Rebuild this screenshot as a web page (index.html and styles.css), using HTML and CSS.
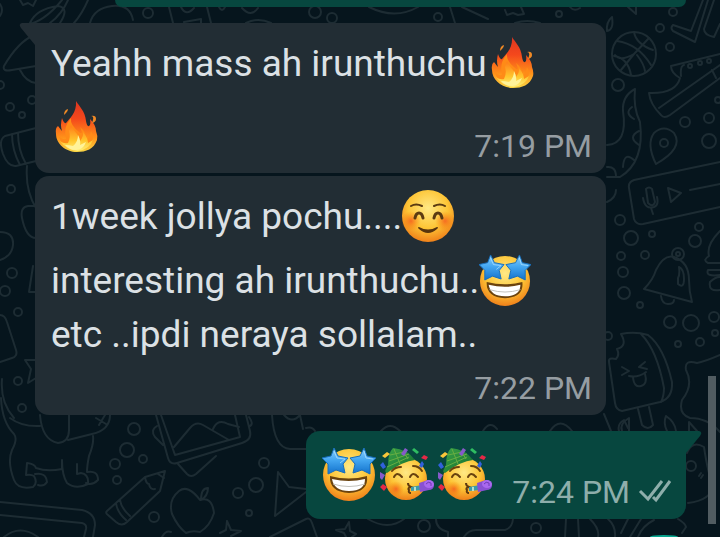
FILE: index.html
```html
<!DOCTYPE html>
<html lang="en">
<head>
<meta charset="utf-8">
<meta name="viewport" content="width=device-width, initial-scale=1">
<title>Chat</title>
<link rel="stylesheet" href="styles.css">
</head>
<body>
<svg class="wallpaper" viewBox="0 0 720 537" preserveAspectRatio="xMinYMin slice" aria-hidden="true">
  <!-- left edge -->
  <path d="M0 16Q4 10 0 4M20 0l3 5 5-2 5 3 3-6M68 0Q62 14 50 23M88 0Q82 14 74 23M62 0Q44 22 26 25M30 23Q36 9 58 6Q70 8 60 23M34 35Q18 42 4 66Q2 72 12 70L36 66M20 70Q26 82 36 83M90 23Q94 8 112 6Q130 4 133 20"/>
  <circle cx="148" cy="13" r="5"/><circle cx="10" cy="107" r="4"/><circle cx="22" cy="115" r="3"/><circle cx="32" cy="100" r="4"/><circle cx="0" cy="85" r="4"/>
  <path d="M36 128L5 136Q-2 140 3 154Q8 167 16 166L36 161M12 134Q12 150 20 165M18 133Q18 150 26 164M27 166Q25 190 36 208M36 206H28Q20 207 22 218Q26 238 36 238M0 232Q14 232 13 245Q12 256 0 260M33 266l-4 26h7M0 315Q5 315 7 322L16 350Q18 356 12 358L0 362M36 360H25l6 9-3 14 8-5M2 379Q0 402 14 418"/>
  <circle cx="11" cy="189" r="4"/><circle cx="12" cy="273" r="5"/><circle cx="5" cy="291" r="5"/><circle cx="18" cy="312" r="4"/><circle cx="18" cy="381" r="4"/><circle cx="22" cy="408" r="4"/>
  <!-- dog -->
  <path d="M1 398Q2 422 14 434Q18 439 12 450Q7 462 14 480Q18 490 33 487Q38 483 34 476Q31 474 26 475L27 463Q35 464 36 468Q47 472 62 469L62 460Q62 475 67 483Q76 490 88 484Q89 474 81 473L77 474L77 464M10 418Q22 427 40 426M40 415Q42 440 58 443Q69 442 69 430V415M68 440L92 434Q110 430 110 415M93 436Q94 444 89 456Q87 466 87 472Q98 470 98 480Q92 486 86 483M35 474Q46 472 47 482Q44 487 38 485M96 418l10 6M105 415l-6 10"/>
  <path d="M0 502L82 510Q95 513 95 525L93 537M0 515L82 523Q87 524 86 529L84 537M4 537Q20 524 38 537"/>
  <!-- pencil, photographs and fruit -->
  <path d="M107 511L145 477L165 471L160 491L127 522Q122 527 116 522L108 515Q105 513 107 511M145 477Q146 484 149 484Q150 490 155 489M158 474l6 4M116 503Q117 512 126 520M120 500Q121 508 130 516"/>
  <path d="M156 415L168 458Q170 465 177 463L242 443Q252 440 250 431L246 415M161 415L175 455L240 437L235 415M174 447L190 428Q196 421 203 425L229 440M213 429Q218 418 228 424L239 427M157 426Q150 430 155 437L163 445M178 464L187 474Q191 478 196 474L216 456M250 426Q254 424 249 417"/>
  <path d="M200 500Q188 484 179 491Q168 500 172 514Q178 527 186 533Q192 530 200 532Q210 526 214 513Q212 496 200 500M201 500Q201 488 208 488Q208 496 201 500"/>
  <circle cx="134" cy="429" r="6"/><circle cx="127" cy="450" r="7"/><circle cx="143" cy="459" r="4"/><circle cx="115" cy="464" r="5"/><circle cx="117" cy="480" r="4"/><circle cx="154" cy="517" r="5"/><circle cx="264" cy="463" r="5"/><circle cx="256" cy="485" r="7"/><circle cx="238" cy="493" r="5"/><circle cx="249" cy="513" r="3"/>
  <path d="M272 415Q274 448 290 449H306M284 415Q292 424 300 415l3 14M278 472L275 516L306 492M278 472L289 487L306 489M227 521l4 9 10 1-10 5M227 521l-1 9-6 3M270 537L306 519Q310 517 312 523L317 537M162 537Q166 530 171 532"/>
  <!-- upper strip -->
  <path d="M169 7l4 16M181 7Q186 17 194 8M207 7l4 16M184 22l17-3v4M219 7q3 6 6 0M242 8Q251 18 258 8M246 23Q258 17 271 23M369 7Q395 20 418 7M450 7l5 16M462 7l26 12M505 10l2 5 6-2 5 2 6-1-3-7M515 23Q527 19 540 23M570 7Q574 12 580 8M628 7l8 7V7"/>
  <circle cx="315" cy="12" r="6"/><circle cx="332" cy="18" r="5"/><circle cx="438" cy="17" r="4"/><circle cx="559" cy="14" r="3"/>
  <!-- ball, shoe, banana -->
  <circle cx="634" cy="54" r="22"/>
  <path d="M617 41Q638 44 651 65M634 32Q636 44 653 50M634 54Q620 62 615 55M634 54L649 38M634 54L621 70M614 56Q628 58 631 75M637 55Q644 64 645 71M607 31Q606 22 612 17Q614 30 607 31"/>
  <path d="M708 0L695 42L673 31Q670 28 673 25L691 31L703 0M714 0L704 29Q704 35 714 37L720 24M720 54L671 66Q671 73 680 78Q676 94 649 93Q650 104 661 115Q664 119 670 115L720 78M720 65L659 108M684 65Q680 66 681 76M712 70l4 8"/>
  <circle cx="690" cy="66" r="2"/><circle cx="700" cy="63" r="2"/><circle cx="709" cy="61" r="2"/>
  <path d="M635 89Q622 96 623 111Q628 144 607 145M635 89Q633 108 640 122Q645 162 620 177H607M632 107q-8 6 2 12M639 131q-12 6 0 14M634 160q-10-9-11 7M607 167Q616 166 616 177"/>
  <path d="M656 164Q646 144 654 133Q664 124 674 133Q684 148 656 164"/><circle cx="664" cy="143" r="4"/>
  <circle cx="673" cy="12" r="4"/><circle cx="660" cy="28" r="4"/><circle cx="670" cy="47" r="4"/><circle cx="618" cy="85" r="6"/><circle cx="685" cy="122" r="5"/><circle cx="709" cy="118" r="5"/><circle cx="709" cy="141" r="7"/><circle cx="718" cy="100" r="3"/>
  <!-- voice note and bell -->
  <path d="M720 162L634 180Q628 182 629 188L634 219Q636 225 643 224L720 207M646 189q3-3 6 0l3 13q-2 6-7 1zM643 198q2 12 11 9q5-2 3-10M651 208l2 6M668 188l13 5-10 9zM690 190L720 184M607 202q9-4 9-12"/>
  <path d="M644 289Q653 280 656 270Q664 254 674 257Q689 262 689 280Q689 291 692 302L644 289M661 296Q662 304 668 304T674 300M679 267q5 2 5 12t-6 5v-6q2-3 1-11"/><circle cx="678" cy="254" r="6"/><circle cx="678" cy="254" r="2"/>
  <circle cx="620" cy="220" r="5"/><circle cx="631" cy="238" r="7"/><circle cx="652" cy="234" r="3"/><circle cx="621" cy="256" r="4"/><circle cx="645" cy="255" r="4"/><circle cx="623" cy="272" r="5"/><circle cx="624" cy="293" r="6"/><circle cx="640" cy="305" r="3"/><circle cx="699" cy="227" r="4"/><circle cx="695" cy="241" r="6"/><circle cx="670" cy="322" r="6"/><circle cx="691" cy="323" r="8"/><circle cx="714" cy="317" r="5"/><circle cx="678" cy="344" r="3"/><circle cx="700" cy="342" r="4"/><circle cx="715" cy="333" r="3"/><circle cx="608" cy="336" r="4"/>
  <path d="M720 231Q706 245 709 256Q702 260 708 263H720M708 270h12M708 270q-3 7 12 5M710 282q5-5 10-5M710 282q-2 10 10 8M720 355Q704 362 697 363Q684 359 686 370Q694 385 682 400Q678 414 690 418Q708 418 720 432"/>
  <!-- ice lolly -->
  <path d="M621 334Q635 331 648 335Q664 347 672 382Q673 398 660 402L622 411Q616 410 615 403L609 362Q608 357 616 359Q620 355 617 349Q628 346 621 334M641 334Q657 350 664 388Q664 396 661 402M638 409l4 16q6 6 11 0l-4-18M622 367l7 4-7 4M645 362l-6 5 8 2M629 376q9 2 17-4M633 377q1 11 8 9t4-12"/>
  <path d="M604 414l7 17M622 431Q619 424 629 418L629 431M667 431Q663 423 666 416Q675 422 676 431M689 431v-9l8 9M687 453Q692 440 704 447Q708 474 713 485Q712 500 688 503"/><circle cx="691" cy="466" r="5"/><path d="M699 476l2-3m0 5l2-3"/>
  <!-- lower strip -->
  <path d="M315 431Q312 426 306 428M381 431Q390 421 400 431M483 431Q490 420 497 429M550 431Q560 416 572 431M619 431Q617 424 624 420L628 428M349 522l-4 7-9 1 8 3 2 4M349 522l1 9 6 3-4 3M368 519Q388 531 404 519M436 519Q436 529 448 532V537M464 537Q468 530 476 530H505Q512 528 513 519M566 519L565 537M578 519L579 537M590 519Q600 529 598 537M608 519Q616 526 615 537M628 519L621 533M641 519L630 537M654 520Q642 526 638 537M678 519Q685 523 686 527L682 533"/><circle cx="424" cy="526" r="6"/><circle cx="536" cy="528" r="5"/>
</svg>

<svg class="defs" aria-hidden="true">
  <defs>
    <radialGradient id="face" cx="50%" cy="35%" r="64%"><stop offset="0" stop-color="#ffe985"/><stop offset=".6" stop-color="#fdc536"/><stop offset="1" stop-color="#f0831b"/></radialGradient>
    <radialGradient id="blush"><stop stop-color="#f4511e" stop-opacity=".75"/><stop offset="1" stop-color="#f57c00" stop-opacity="0"/></radialGradient>
    <linearGradient id="flame" x1="0" y1="0" x2="0" y2="1"><stop stop-color="#dc3620"/><stop offset=".35" stop-color="#f4481c"/><stop offset=".72" stop-color="#ff9219"/><stop offset="1" stop-color="#fbd744"/></linearGradient>
    <linearGradient id="ember" x1="0" y1="0" x2="0" y2="1"><stop stop-color="#ff7a19"/><stop offset=".6" stop-color="#ffc62c"/><stop offset="1" stop-color="#fff17a"/></linearGradient>
    <linearGradient id="star" x1="0" y1="0" x2="0" y2="1"><stop stop-color="#8ccffb"/><stop offset=".45" stop-color="#45a8f2"/><stop offset="1" stop-color="#1271cb"/></linearGradient>
    <linearGradient id="hat" x1="0" y1="0" x2="1" y2="1"><stop stop-color="#3da548"/><stop offset="1" stop-color="#106b2d"/></linearGradient>
    <symbol id="fire" viewBox="0 0 52 52">
      <path fill="url(#flame)" d="M25 0C28 5 34 10 35 20Q36 26 38 25Q40 24 39 18Q45 24 45 30Q47 35 46 39C43 48 35 51 26 51C15 51 5 43 5 33Q4 27 7 25Q10 29 11 30Q9 24 11 17Q13 23 15 22C18 18 26 12 25 0"/>
      <path fill="#ff8b17" d="M20 17Q19 24 28 31Q33 35 29 26Q36 32 36 38Q39 36 40 30Q44 36 40 42Q34 49 24 49Q11 47 8 36Q15 40 15 37Q12 26 20 17"/>
      <path fill="url(#ember)" d="M20 24Q22 29 26 33Q29 37 29 40Q33 35 32 31Q37 37 37 42L42 39Q39 48 27 50Q15 49 9 40Q13 43 17 42Q20 36 18 30Z"/>
      <path fill="#fff39a" d="M27 34Q30 40 29 44L35 41Q32 49 25 49T14 44Q18 44 22 45Q27 41 27 34"/>
      <path fill="#f18a25" d="M17 8q-4 1-4 6l2-2q2-2 2-4M40 15q3 0 2 4l-1 3q4-1 4-4q0-4-5-3"/>
    </symbol>
    <symbol id="smile" viewBox="0 0 52 52">
      <circle cx="26" cy="26" r="26" fill="url(#face)"/><circle cx="9" cy="31" r="10" fill="url(#blush)"/><circle cx="43" cy="31" r="10" fill="url(#blush)"/>
      <g fill="none" stroke="#5b3b12" stroke-linecap="round"><path stroke-width="2" d="M9 16Q14 13 20 16M32 16Q38 13 43 16"/><path stroke-width="3" d="M13 28Q14 23 17 23T21 28M32 28Q33 23 36 23T40 28"/></g>
      <path fill="#57340d" d="M17 37Q26 42 35 37Q37 37 35 39Q26 47 17 39Q15 37 17 37"/>
    </symbol>
    <symbol id="starstruck" viewBox="0 0 54 54">
      <circle cx="27" cy="28" r="26" fill="url(#face)"/>
      <path fill="#6b430e" d="M8 29Q27 34 45 29Q47 45 27 46Q7 45 8 29"/><path fill="#fff" d="M10 32Q27 36 43 32Q43 44 27 44Q12 44 10 32"/><path d="M11 37Q27 42 43 37" fill="none" stroke="#c2c1bb"/>
      <g fill="url(#star)" stroke="#176ebc" stroke-linejoin="round"><path d="M12 1L16 9L26 11L21 17L23 26L14 23L6 27L6 17L0 11L9 9Z"/><path d="M42 1L45 9L54 11L48 17L48 27L40 23L31 26L33 17L28 11L38 9Z"/></g>
      <path d="M12 4l3 7 8 1-5 4M42 4l2 7 7 1" fill="none" stroke="#b6e5ff" opacity=".7"/>
    </symbol>
    <symbol id="party" viewBox="0 0 54 54">
      <circle cx="26" cy="32" r="21" fill="url(#face)"/><circle cx="16" cy="42" r="8" fill="url(#blush)"/>
      <path fill="url(#hat)" d="M13 1Q27 2 35 13Q23 14 7 26Q4 25 6 22L8 18Q8 6 13 1"/>
      <path fill="none" stroke="#67ad43" d="M10 8l14-3M9 14l20-7M7 20l22-10M14 2l6 15M23 4l5 8"/>
      <path fill="none" stroke="#69420e" stroke-width="2" stroke-linecap="round" d="M12 24Q15 20 21 20M33 19Q39 19 42 24M14 30q3-6 8 0M30 30q3-6 8 0"/><path fill="none" stroke="#5f3a10" stroke-width="2" d="M28 36q0 3 3 4-4 1-2 3-1 3 2 3"/>
      <path fill="#3c9ba9" d="M31 40l11-2v5l-11 1z"/><path fill="#b5e0d0" d="M34 40l2 0v4h-2z"/><path fill="#8950d3" d="M39 36L48 33Q54 34 54 39Q53 43 49 43L40 45Z"/><ellipse cx="49" cy="37" rx="5" ry="4" fill="#a968ef"/><path d="M46 37q2-3 5-1v3" fill="none" stroke="#7039b8"/>
      <path fill="#f8c63a" d="M2 9l5-4 3 2-5 4z"/><path fill="#865ac9" d="M21 7l4-6 3 2-4 6zM0 25l5 3-3 5-3-3z"/><path fill="#2fbd62" d="M34 1l5 4-2 2-5-4z"/><path fill="#e62846" d="M41 11l3-3 4 2-2 3zM0 40l3-3 4 3-3 4z"/><path fill="#3160dc" d="M0 18l3-3 3 5-3 2zM39 19l3-5 2 3-2 4z"/>
    </symbol>
  </defs>
</svg>

<main class="chat">
  <div class="bubble out previous"></div>
  <article class="bubble in tail">
    <p class="line">Yeahh mass ah irunthuchu<svg class="emoji" role="img" aria-label="Fire"><use href="#fire"/></svg></p>
    <div class="foot"><p class="line"><svg class="emoji" role="img" aria-label="Fire"><use href="#fire"/></svg></p><time>7:19 PM</time></div>
    <svg class="corner" viewBox="0 0 16 24" aria-hidden="true"><path d="M16 0H3Q-1 1 2 5L16 22Z"/></svg>
  </article>
  <article class="bubble in next">
    <p class="line">1week jollya pochu....<svg class="emoji" role="img" aria-label="Smiling face"><use href="#smile"/></svg></p>
    <p class="line">interesting ah irunthuchu..<svg class="emoji" role="img" aria-label="Star-struck"><use href="#starstruck"/></svg></p>
    <p class="line plain">etc ..ipdi neraya sollalam..</p>
    <time>7:22 PM</time>
  </article>
  <article class="bubble out reply">
    <div class="foot large">
      <p class="emojis"><svg role="img" aria-label="Star-struck"><use href="#starstruck"/></svg><svg role="img" aria-label="Party face"><use href="#party"/></svg><svg role="img" aria-label="Party face"><use href="#party"/></svg></p>
      <time>7:24 PM</time>
      <svg class="ticks" viewBox="0 0 34 24" role="img" aria-label="Delivered"><path d="M2 12L10 20L24 2M15 18L18 21L32 2"/></svg>
    </div>
    <svg class="corner" viewBox="0 0 16 24" aria-hidden="true"><path d="M0 0H13Q17 1 14 5L0 22Z"/></svg>
  </article>
</main>
<div class="scroll-thumb"></div>
<div class="round-button"></div>
</body>
</html>
```
FILE: styles.css
```css
* { box-sizing: border-box; }
body {
  position: relative;
  min-height: 100vh;
  margin: 0;
  background: #06151d;
  color: #dce1e5;
  font: 37px/64px Roboto, sans-serif;
}
p { margin: 0; }
.wallpaper {
  position: absolute;
  inset: 0;
  width: 100%;
  height: 100%;
  fill: none;
  stroke: #1d2c33;
  stroke-width: 2;
  stroke-linecap: round;
  stroke-linejoin: round;
}
.defs { position: absolute; width: 0; height: 0; }
.chat {
  position: relative;
  display: flex;
  flex-direction: column;
  align-items: flex-start;
  padding: 0 34px 18px 35px;
}
.bubble {
  position: relative;
  padding: 9px 14px 8px 16px;
  border-radius: 14px;
}
.in { width: calc(100% - 80px); background: #222d34; }
.out { align-self: flex-end; background: #07473f; }
.previous {
  width: calc(100% - 80px);
  height: 7px;
  padding: 0;
  border-radius: 0 0 14px 14px;
}
.tail { margin-top: 16px; border-top-left-radius: 0; }
.next { margin-top: 3px; }
.reply { margin-top: 16px; border-top-right-radius: 0; }
.line { height: 64px; white-space: nowrap; }
.plain { height: 44px; line-height: 44px; }
.emoji {
  width: 52px;
  height: 52px;
  vertical-align: middle;
  margin-top: -6px;
}
time {
  display: block;
  color: #969da2;
  font-size: 32px;
  line-height: 38px;
  text-align: right;
}
.plain + time { margin-top: 12px; }
.foot {
  display: flex;
  justify-content: space-between;
  min-height: 69px;
}
.foot time { align-self: flex-end; }
.large { min-height: 71px; }
.emojis { display: flex; gap: 4px; align-items: center; height: 68px; }
.emojis svg { width: 54px; height: 54px; }
.out time { margin-left: 20px; color: #8eaeab; }
.ticks {
  align-self: flex-end;
  width: 34px;
  height: 24px;
  margin: 0 0 8px 8px;
  fill: none;
  stroke: #8eaeab;
  stroke-width: 3;
}
.corner { position: absolute; top: 0; width: 16px; height: 24px; }
.in .corner { right: 100%; fill: #222d34; }
.out .corner { left: 100%; fill: #07473f; }
.scroll-thumb {
  position: absolute;
  right: 4px;
  bottom: 13px;
  width: 8px;
  height: 148px;
  background: #515c61;
}
.round-button {
  position: absolute;
  right: 42px;
  bottom: 0;
  width: 28px;
  height: 2px;
  border-radius: 14px 14px 0 0 / 2px 2px 0 0;
  background: #08a68f;
}
```
